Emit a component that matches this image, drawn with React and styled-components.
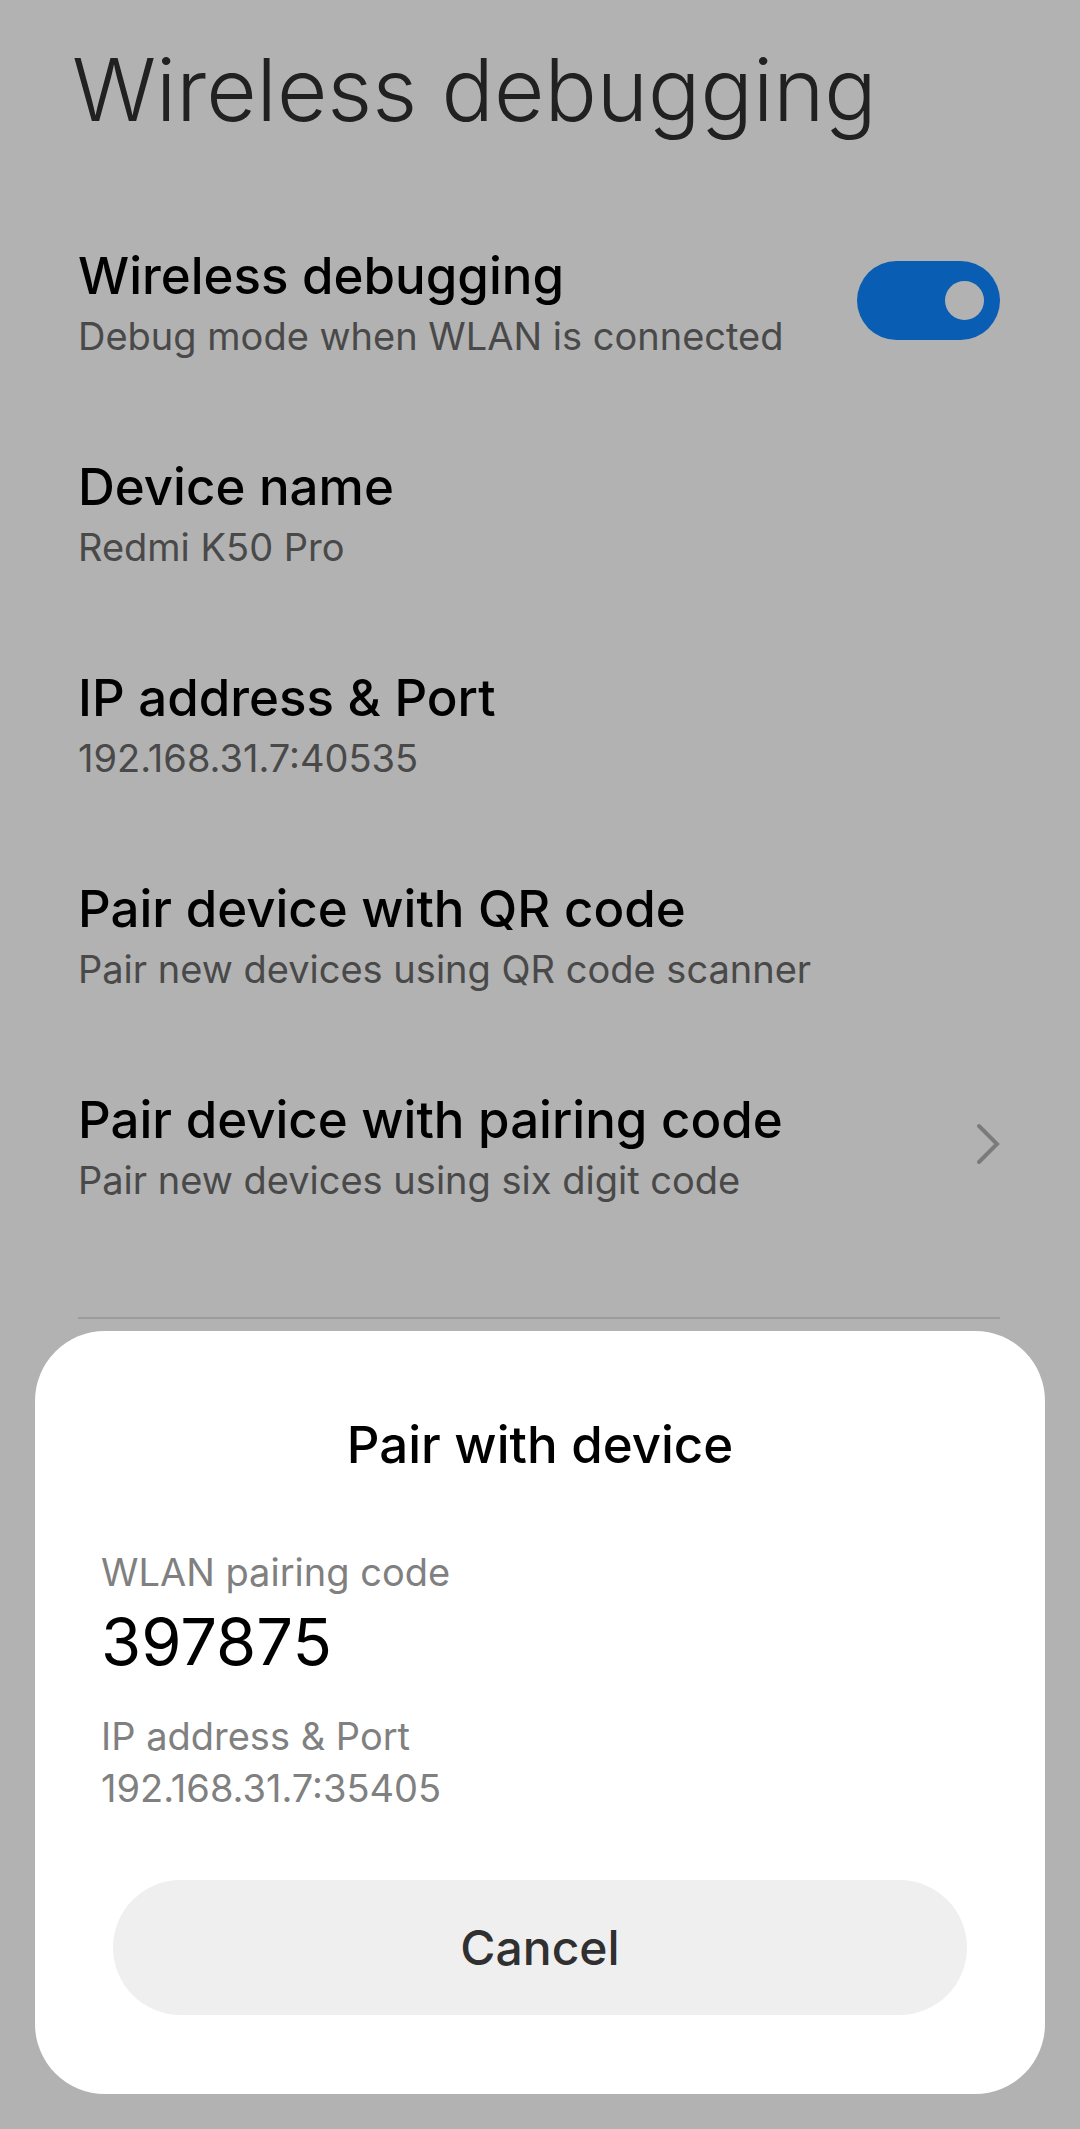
import React, { useState } from "react";
import styled, { createGlobalStyle } from "styled-components";

const GlobalStyle = createGlobalStyle`
  *, *::before, *::after {
    box-sizing: border-box;
  }

  body {
    margin: 0;
    background: #ffffff;
    color: #000000;
    font-family: Inter, Roboto, "Liberation Sans", sans-serif;
  }
`;

const Page = styled.main`
  min-height: 100vh;
  padding: 34px 80px 0 78px;
`;

const PageTitle = styled.h1`
  margin: 0 0 94px -6px;
  font-size: 87px;
  font-weight: 300;
  line-height: 112px;
  color: #303030;
`;

const Settings = styled.div`
  display: flex;
  flex-direction: column;
  gap: 91px;
`;

const Row = styled.div`
  display: flex;
  align-items: center;
  justify-content: space-between;
  gap: 24px;
  width: 100%;
  padding: 0;
  border: 0;
  background: none;
  color: inherit;
  font-family: inherit;
  text-align: left;
`;

const RowText = styled.span`
  display: flex;
  flex-direction: column;
`;

const RowTitle = styled.span`
  font-size: 51px;
  font-weight: 500;
  line-height: 72px;
`;

const RowSummary = styled.span`
  font-size: 38px;
  line-height: 48px;
  color: #696969;
`;

const Switch = styled.input`
  appearance: none;
  display: flex;
  align-items: center;
  flex: none;
  width: 143px;
  height: 79px;
  margin: 0;
  padding: 0 16px;
  border-radius: 40px;
  background: #c8c8c8;
  cursor: pointer;

  &::before {
    content: "";
    width: 39px;
    height: 39px;
    border-radius: 50%;
    background: #ffffff;
  }

  &:checked {
    justify-content: flex-end;
    background: #0d86ff;
  }
`;

const Chevron = styled.svg`
  flex: none;
  width: 24px;
  height: 42px;
  fill: none;
  stroke: #b0b0b0;
  stroke-width: 4;
  stroke-linecap: round;
  stroke-linejoin: miter;
`;

const Divider = styled.hr`
  height: 2px;
  margin: 113px 0 0;
  border: 0;
  background: #e0e0e0;
`;

const Scrim = styled.div`
  position: fixed;
  inset: 0;
  display: flex;
  align-items: flex-end;
  padding: 35px;
  background: rgba(0, 0, 0, 0.3);
`;

const Dialog = styled.section`
  display: flex;
  flex-direction: column;
  flex: 1;
  padding: 78px 66px 79px;
  border-radius: 70px;
  background: #ffffff;
`;

const DialogTitle = styled.h2`
  margin: 0 0 65px;
  font-size: 51px;
  font-weight: 500;
  line-height: 72px;
  text-align: center;
`;

const Detail = styled.p`
  margin: 0;
  font-size: 38px;
  line-height: 52px;
  color: #808080;
`;

const PairingCode = styled.p`
  margin: 0 0 24px;
  font-size: 65px;
  font-weight: 400;
  line-height: 88px;
`;

const CancelButton = styled.button`
  height: 135px;
  margin: 66px 12px 0;
  border: 0;
  border-radius: 68px;
  background: #efefef;
  color: #303030;
  font-family: inherit;
  font-size: 48px;
  font-weight: 500;
  cursor: pointer;
`;

function Labels({ title, summary }) {
  return (
    <RowText>
      <RowTitle>{title}</RowTitle>
      <RowSummary>{summary}</RowSummary>
    </RowText>
  );
}

export default function App() {
  const [enabled, setEnabled] = useState(true);
  const [pairing, setPairing] = useState(true);

  return (
    <>
      <GlobalStyle />
      <Page>
        <PageTitle>Wireless debugging</PageTitle>
        <Settings>
          <Row as="label" htmlFor="wireless-debugging">
            <Labels
              title="Wireless debugging"
              summary="Debug mode when WLAN is connected"
            />
            <Switch
              id="wireless-debugging"
              type="checkbox"
              role="switch"
              checked={enabled}
              onChange={(event) => setEnabled(event.target.checked)}
            />
          </Row>
          <Row>
            <Labels title="Device name" summary="Redmi K50 Pro" />
          </Row>
          <Row>
            <Labels title="IP address & Port" summary="192.168.31.7:40535" />
          </Row>
          <Row as="button" type="button">
            <Labels
              title="Pair device with QR code"
              summary="Pair new devices using QR code scanner"
            />
          </Row>
          <Row as="button" type="button" onClick={() => setPairing(true)}>
            <Labels
              title="Pair device with pairing code"
              summary="Pair new devices using six digit code"
            />
            <Chevron viewBox="0 0 24 42" aria-hidden="true">
              <path d="M3 3 L21 21 L3 39" />
            </Chevron>
          </Row>
        </Settings>
        <Divider />
      </Page>
      {pairing && (
        <Scrim>
          <Dialog role="dialog" aria-modal="true" aria-labelledby="pair-title">
            <DialogTitle id="pair-title">Pair with device</DialogTitle>
            <Detail>WLAN pairing code</Detail>
            <PairingCode>397875</PairingCode>
            <Detail>IP address & Port</Detail>
            <Detail>192.168.31.7:35405</Detail>
            <CancelButton type="button" onClick={() => setPairing(false)}>
              Cancel
            </CancelButton>
          </Dialog>
        </Scrim>
      )}
    </>
  );
}
